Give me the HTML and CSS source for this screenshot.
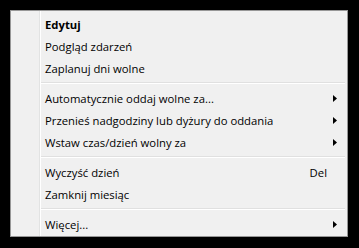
FILE: index.html
```html
<!DOCTYPE html>
<html lang="pl">
<head>
<meta charset="utf-8">
<title>Menu</title>
<link rel="stylesheet" href="styles.css">
</head>
<body>
<div class="menu">
  <div class="item bold"><span class="label">Edytuj</span></div>
  <div class="item"><span class="label">Podgląd zdarzeń</span></div>
  <div class="item"><span class="label">Zaplanuj dni wolne</span></div>
  <div class="sep"></div>
  <div class="item"><span class="label">Automatycznie oddaj wolne za...</span><span class="arrow"></span></div>
  <div class="item"><span class="label">Przenieś nadgodziny lub dyżury do oddania</span><span class="arrow"></span></div>
  <div class="item"><span class="label">Wstaw czas/dzień wolny za</span><span class="arrow"></span></div>
  <div class="sep"></div>
  <div class="item"><span class="label">Wyczyść dzień</span><span class="key">Del</span><span class="noarrow"></span></div>
  <div class="item"><span class="label">Zamknij miesiąc</span></div>
  <div class="sep"></div>
  <div class="item"><span class="label">Więcej...</span><span class="arrow"></span></div>
</div>
</body>
</html>
```
FILE: styles.css
```css
html, body {
  margin: 0;
  background: #000;
}
body {
  padding: 10px 0 0 10px;
  height: 248px;
  box-sizing: border-box;
}
.menu {
  width: 338px;
  box-sizing: border-box;
  border: 1px solid #979797;
  background-color: #f0f0f0;
  background-image: linear-gradient(to right, transparent 28px, #e2e3e3 28px, #e2e3e3 29px, #ffffff 29px, #ffffff 30px, transparent 30px);
  padding: 2px 2px 1px 2px;
  font-family: "Open Sans", "Noto Sans", sans-serif;
  font-size: 11.3px;
  color: #000;
}
.item {
  height: 22px;
  display: flex;
  align-items: center;
  padding-left: 32px;
  padding-right: 8px;
  padding-top: 1px;
  box-sizing: border-box;
}
.bold .label {
  font-weight: 700;
}
.label {
  flex: 1;
  white-space: nowrap;
}
.key {
  margin-right: 6px;
}
.arrow, .noarrow {
  width: 4px;
  height: 7px;
}
.arrow {
  background: #000;
  clip-path: polygon(0 0, 100% 50%, 0 100%);
}
.sep {
  height: 8px;
  margin-left: 28px;
  background: linear-gradient(to bottom, transparent 3px, #e0e0e0 3px, #e0e0e0 4px, #ffffff 4px, #ffffff 5px, transparent 5px);
}
```
